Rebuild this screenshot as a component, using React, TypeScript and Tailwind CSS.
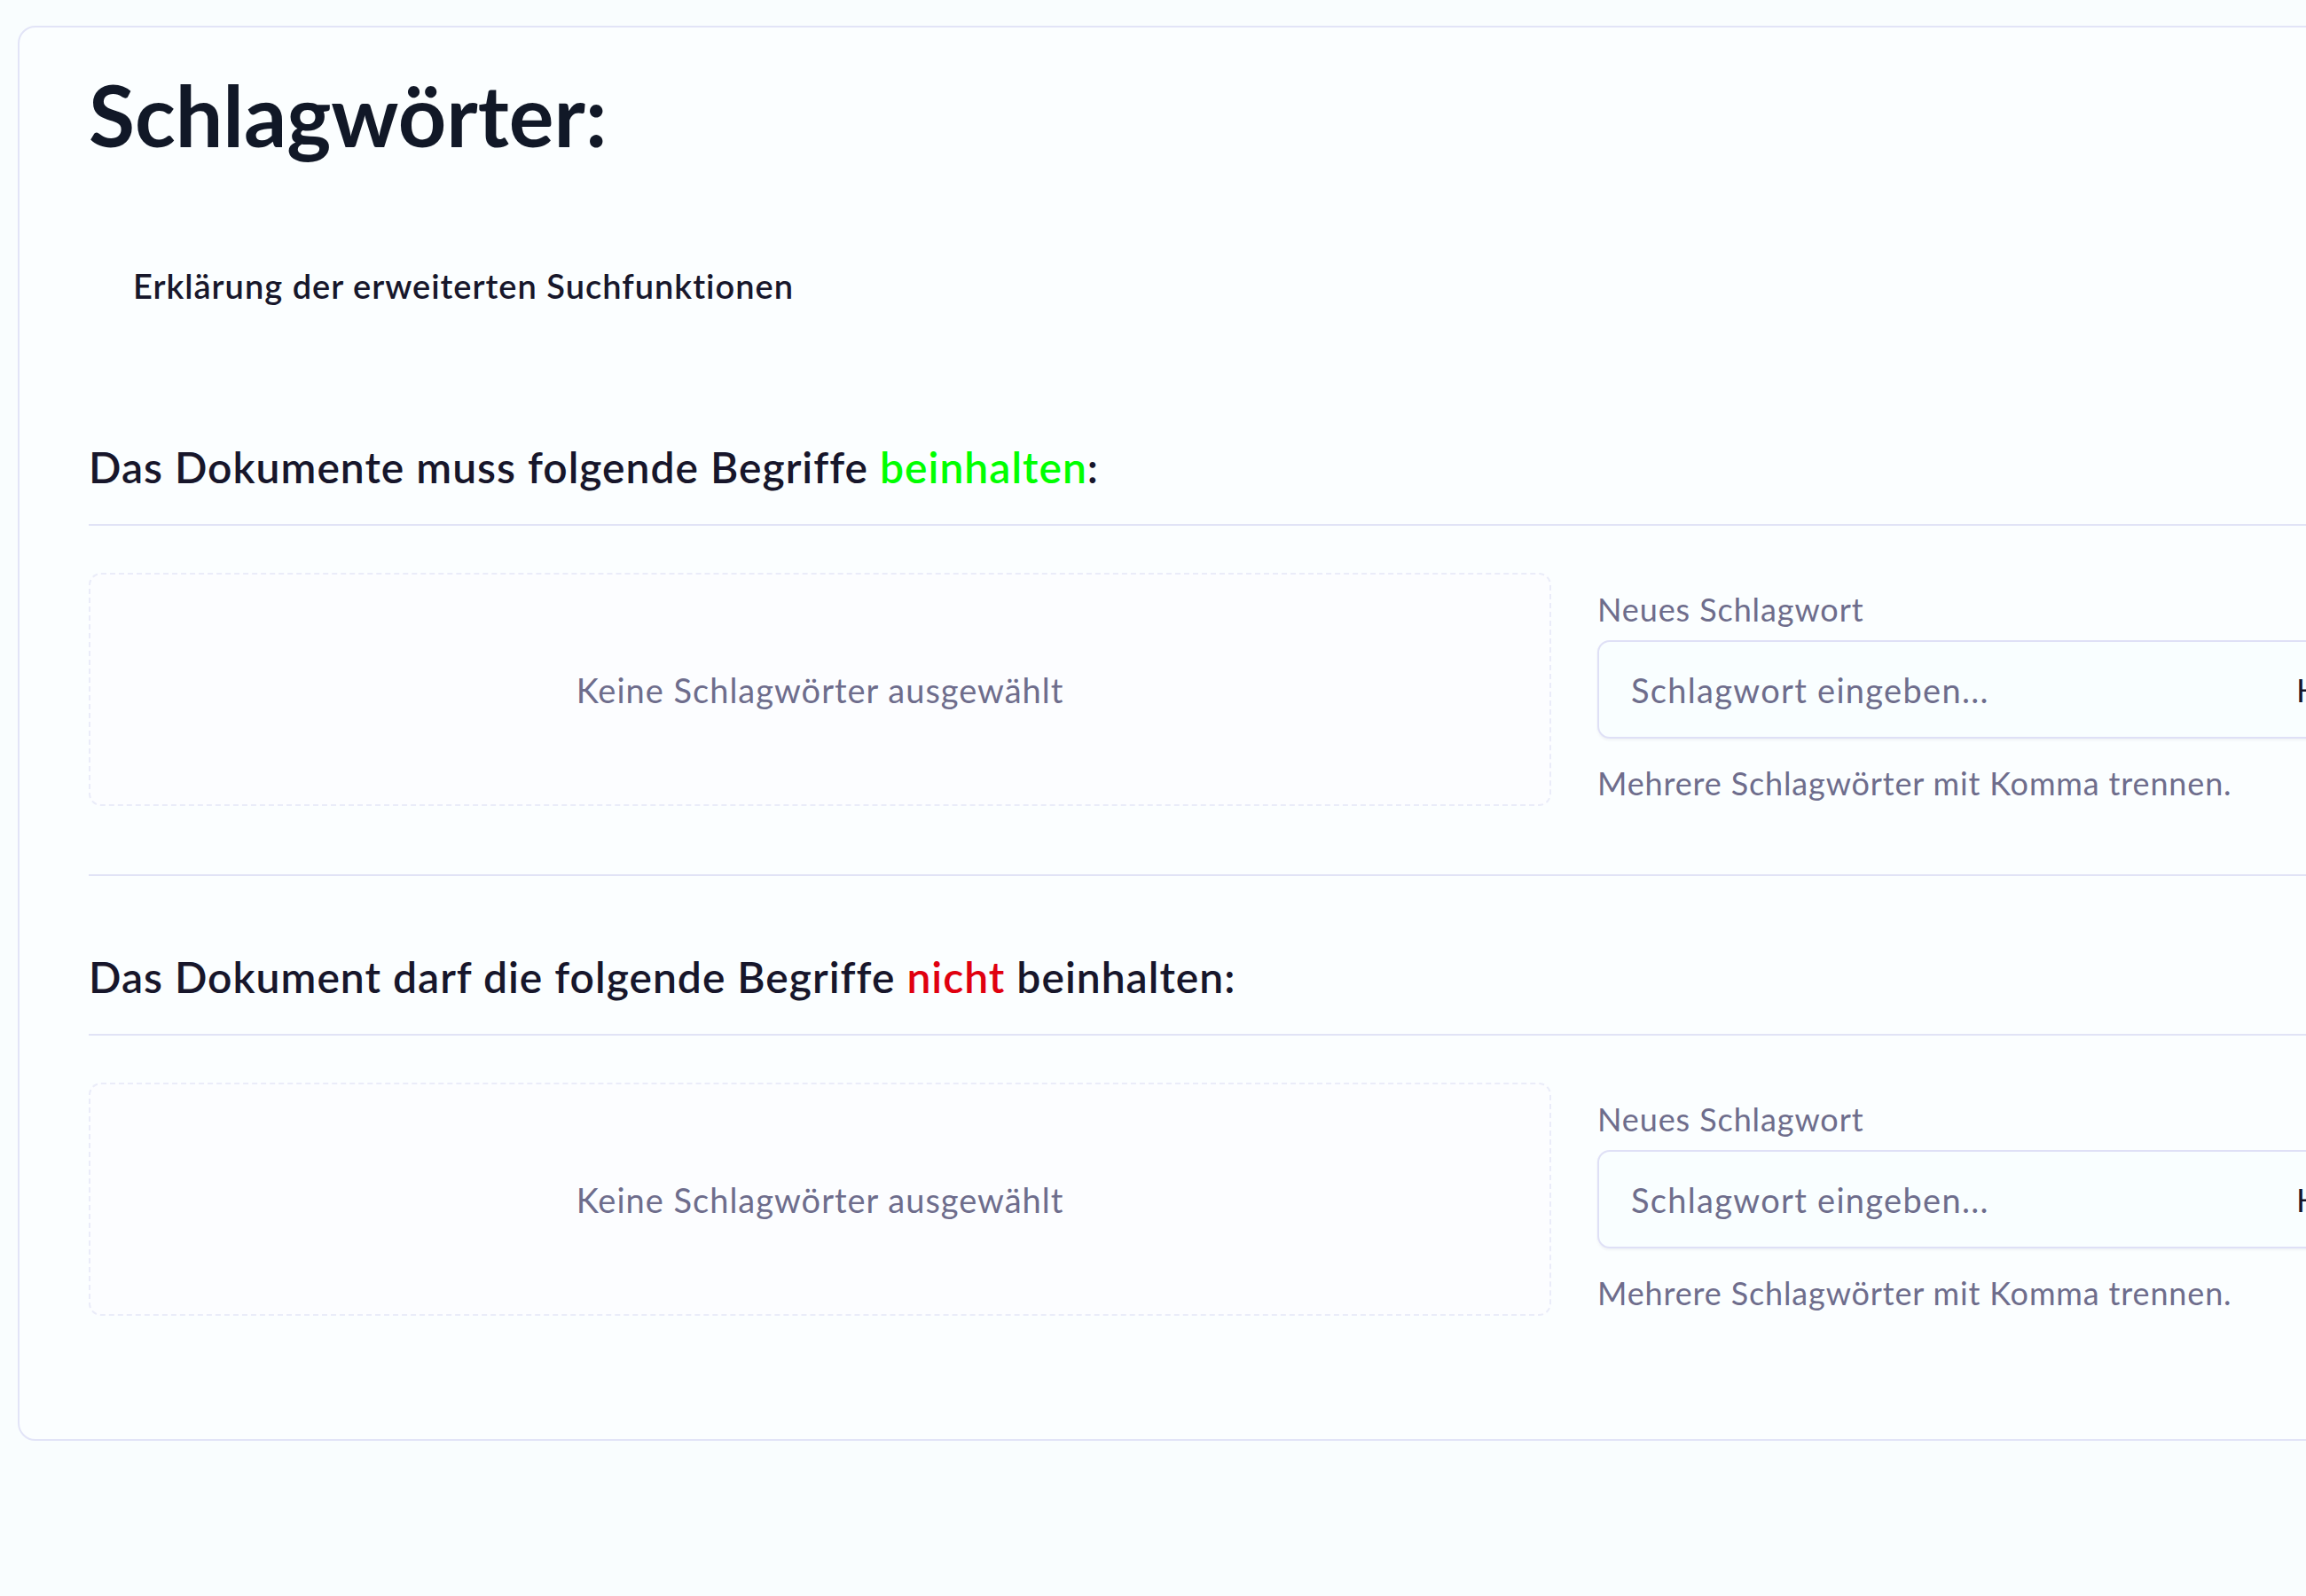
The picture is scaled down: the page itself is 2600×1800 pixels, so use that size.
const font = { fontFamily: 'Lato, "Noto Sans", sans-serif' };

function KeywordRow() {
  return (
    <div className="flex items-start gap-[52px]">
      <div className="flex h-[263px] w-[1649px] shrink-0 items-center justify-center rounded-[14px] border-2 border-dashed border-[#eaecf9] bg-[#fcfdff]">
        <span className="text-[38px] leading-[48px] tracking-[1px] text-[#6e6d8c]">Keine Schlagwörter ausgewählt</span>
      </div>

      <div className="w-[1000px] shrink-0 pt-[17px]">
        <label className="block text-[36px] leading-[48px] tracking-[0.9px] text-[#6e6d8c]">Neues Schlagwort</label>
        <div className="mt-[11px] flex h-[111px] items-center rounded-[14px] border-2 border-[#dfe0f6] bg-[#f9feff] pl-[36px] shadow-[0_2px_3px_rgba(30,30,80,0.05)]">
          <span className="w-[750px] shrink-0 text-[38px] leading-[48px] tracking-[1.3px] text-[#6e6d8c]">Schlagwort eingeben...</span>
          <button className="text-[36px] leading-[48px] text-[#17172b]">Hinzufügen</button>
        </div>
        <p className="mt-[26px] text-[36px] leading-[48px] tracking-[0.85px] text-[#6e6d8c]">Mehrere Schlagwörter mit Komma trennen.</p>
      </div>
    </div>
  );
}

export default function App() {
  return (
    <div className="h-screen w-screen overflow-hidden bg-[#f9fdfe]" style={font}>
      <div className="ml-[20px] mt-[29px] w-[2900px] rounded-[20px] border-2 border-[#e2e4f7] bg-[#fbfeff] px-[78px] pb-[139px] pt-[51px]">
        <h1 className="text-[95px] font-bold leading-[94px] text-[#111827]">Schlagwörter:</h1>

        <div className="mt-[122px] pl-[50px] text-[38px] font-semibold leading-[48px] tracking-[1px] text-[#17172b]">
          Erklärung der erweiterten Suchfunktionen
        </div>

        <h2 className="mt-[151px] text-[48px] font-semibold leading-[60px] tracking-[1px] text-[#17162b]">
          Das Dokumente muss folgende Begriffe <span className="text-[#00ff00]">beinhalten</span>:
        </h2>
        <div className="mt-[34px] h-[2px] bg-[#e1e3f6]" />
        <div className="mt-[53px]">
          <KeywordRow />
        </div>

        <div className="mt-[77px] h-[2px] bg-[#e1e3f6]" />

        <h2 className="mt-[84px] text-[48px] font-semibold leading-[60px] tracking-[1px] text-[#17162b]">
          Das Dokument darf die folgende Begriffe <span className="text-[#e0000f]">nicht</span> beinhalten:
        </h2>
        <div className="mt-[34px] h-[2px] bg-[#e1e3f6]" />
        <div className="mt-[53px]">
          <KeywordRow />
        </div>
      </div>
    </div>
  );
}
